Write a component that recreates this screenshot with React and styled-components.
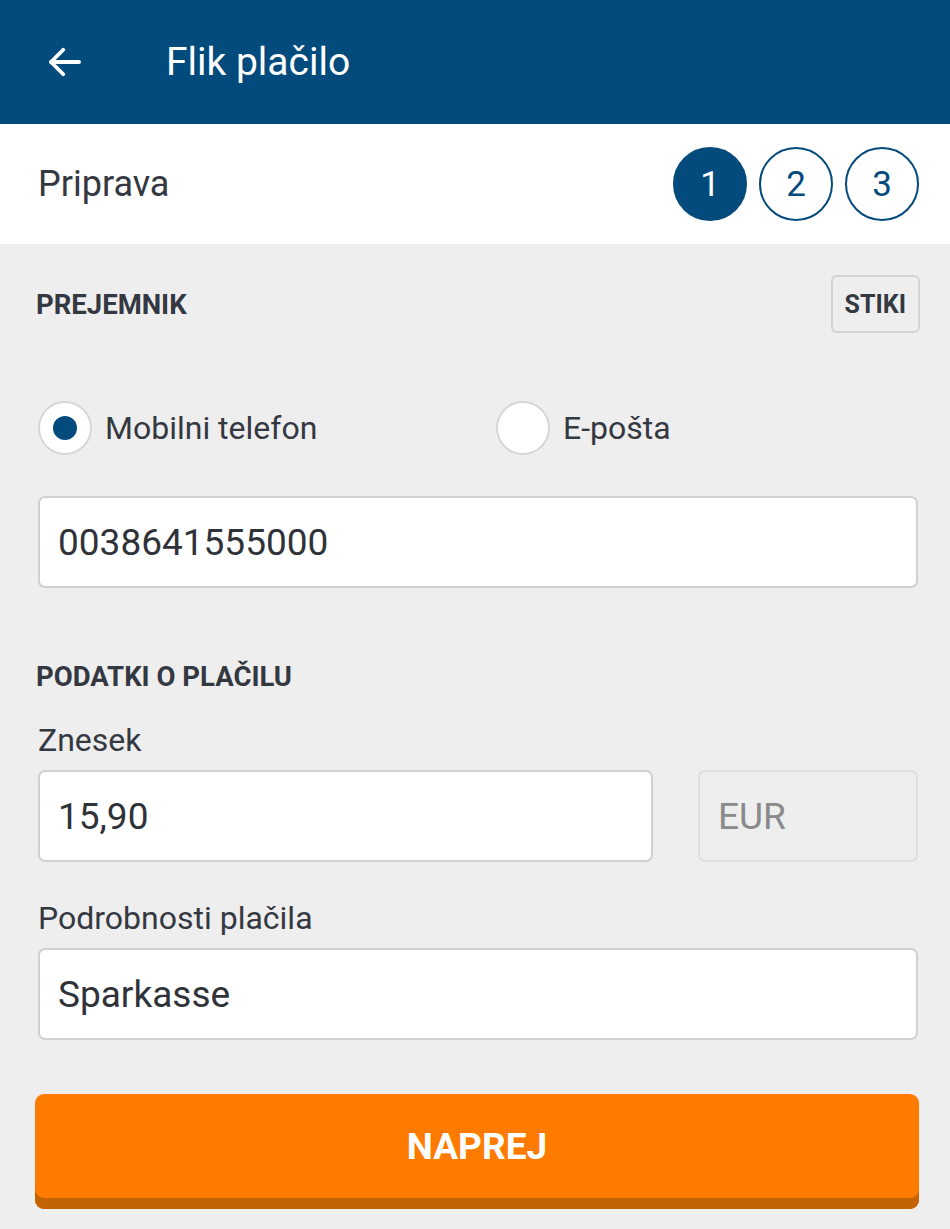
import React from 'react';
import styled, { createGlobalStyle } from 'styled-components';

const GlobalStyle = createGlobalStyle`
  html, body {
    margin: 0;
    padding: 0;
    background: #eeeeee;
    font-family: Roboto, "Noto Sans", sans-serif;
  }
  * { box-sizing: border-box; }
`;

const Page = styled.div`
  width: 950px;
  min-height: 1229px;
  background: #eeeeee;
  display: flex;
  flex-direction: column;
`;

const Header = styled.header`
  height: 124px;
  background: #034b7d;
  display: flex;
  align-items: center;
  padding-left: 44px;
  color: #fff;
`;

const BackButton = styled.button`
  background: none;
  border: 0;
  padding: 0;
  width: 42px;
  height: 42px;
  display: flex;
  align-items: center;
  justify-content: center;
  cursor: pointer;
`;

const Title = styled.h1`
  margin: 0 0 0 80px;
  font-size: 39px;
  font-weight: 400;
`;

const StepBar = styled.div`
  height: 120px;
  background: #fff;
  display: flex;
  align-items: center;
  justify-content: space-between;
  padding: 0 31px 0 38px;
`;

const StepLabel = styled.div`
  font-size: 36px;
  color: #343841;
`;

const Steps = styled.div`
  display: flex;
  gap: 12px;
`;

const Step = styled.div`
  width: 74px;
  height: 74px;
  border-radius: 50%;
  border: 2px solid #034b7d;
  background: ${p => (p.$active ? '#034b7d' : '#fff')};
  color: ${p => (p.$active ? '#fff' : '#034b7d')};
  display: flex;
  align-items: center;
  justify-content: center;
  font-size: 35px;
`;

const Body = styled.main`
  padding: 0 32px 0 36px;
  display: flex;
  flex-direction: column;
`;

const SectionRow = styled.div`
  display: flex;
  align-items: center;
  justify-content: space-between;
  margin-top: ${p => p.$top || 0}px;
`;

const SectionTitle = styled.h2`
  margin: 0;
  font-size: 27.5px;
  font-weight: 700;
  color: #343841;
`;

const SmallButton = styled.button`
  height: 58px;
  margin-right: -2px;
  padding: 0 12px;
  border: 2px solid #d3d3d3;
  border-radius: 6px;
  background: #eeeeee;
  font-family: inherit;
  font-size: 25px;
  font-weight: 700;
  color: #343841;
`;

const RadioRow = styled.div`
  display: flex;
  margin-top: 68px;
  padding-left: 2px;
`;

const RadioOption = styled.label`
  display: flex;
  align-items: center;
  gap: 13px;
  flex: 0 0 ${p => p.$width || 'auto'};
  font-size: 32px;
  color: #343841;
`;

const RadioCircle = styled.span`
  flex: none;
  width: 54px;
  height: 54px;
  border-radius: 50%;
  background: #fff;
  border: 2px solid #d6d6d6;
  display: flex;
  align-items: center;
  justify-content: center;
  &::after {
    content: '';
    display: ${p => (p.$checked ? 'block' : 'none')};
    width: 24px;
    height: 24px;
    border-radius: 50%;
    background: #034b7d;
  }
`;

const Field = styled.div`
  height: 92px;
  margin-left: 2px;
  flex: ${p => p.$flex || 'none'};
  width: ${p => p.$width || 'auto'};
  background: ${p => (p.$disabled ? '#eeeeee' : '#fff')};
  border: 2px solid ${p => (p.$disabled ? '#dedede' : '#d0d0d0')};
  border-radius: 7px;
  display: flex;
  align-items: center;
  padding-left: 18px;
  font-size: 37px;
  color: ${p => (p.$disabled ? '#8a8a8a' : '#2f3238')};
  margin-top: ${p => p.$top || 0}px;
`;

const FieldLabel = styled.div`
  font-size: 32px;
  color: #343841;
  margin: ${p => p.$top || 0}px 0 0 2px;
  height: 30px;
  line-height: 30px;
`;

const AmountRow = styled.div`
  display: flex;
  gap: 43px;
  margin-top: 15px;
`;

const PrimaryButton = styled.button`
  margin: 54px -1px 0 -1px;
  height: 115px;
  border: 0;
  border-radius: 9px;
  background: #ff7b00;
  box-shadow: inset 0 -11px 0 #c46304;
  color: #fff;
  font-family: inherit;
  font-size: 37px;
  font-weight: 700;
  padding-bottom: 11px;
  cursor: pointer;
`;

const BackArrow = () => (
  <svg width="42" height="42" viewBox="0 0 24 24" fill="none" stroke="#fff" strokeWidth="2.2" strokeLinecap="round" strokeLinejoin="round">
    <path d="M20 12H4" />
    <path d="M11 5l-7 7 7 7" />
  </svg>
);

export default function App() {
  return (
    <Page>
      <GlobalStyle />
      <Header>
        <BackButton aria-label="Nazaj">
          <BackArrow />
        </BackButton>
        <Title>Flik plačilo</Title>
      </Header>
      <StepBar>
        <StepLabel>Priprava</StepLabel>
        <Steps>
          {[1, 2, 3].map(n => (
            <Step key={n} $active={n === 1}>{n}</Step>
          ))}
        </Steps>
      </StepBar>
      <Body>
        <SectionRow $top={31}>
          <SectionTitle>PREJEMNIK</SectionTitle>
          <SmallButton>STIKI</SmallButton>
        </SectionRow>
        <RadioRow>
          <RadioOption $width="458px">
            <RadioCircle $checked />
            Mobilni telefon
          </RadioOption>
          <RadioOption>
            <RadioCircle />
            E-pošta
          </RadioOption>
        </RadioRow>
        <Field $top={41}>0038641555000</Field>
        <SectionRow $top={72}>
          <SectionTitle>PODATKI O PLAČILU</SectionTitle>
        </SectionRow>
        <FieldLabel $top={32}>Znesek</FieldLabel>
        <AmountRow>
          <Field $width="615px">15,90</Field>
          <Field $flex="1" $disabled>EUR</Field>
        </AmountRow>
        <FieldLabel $top={41}>Podrobnosti plačila</FieldLabel>
        <Field $top={15}>Sparkasse</Field>
        <PrimaryButton>NAPREJ</PrimaryButton>
      </Body>
    </Page>
  );
}
